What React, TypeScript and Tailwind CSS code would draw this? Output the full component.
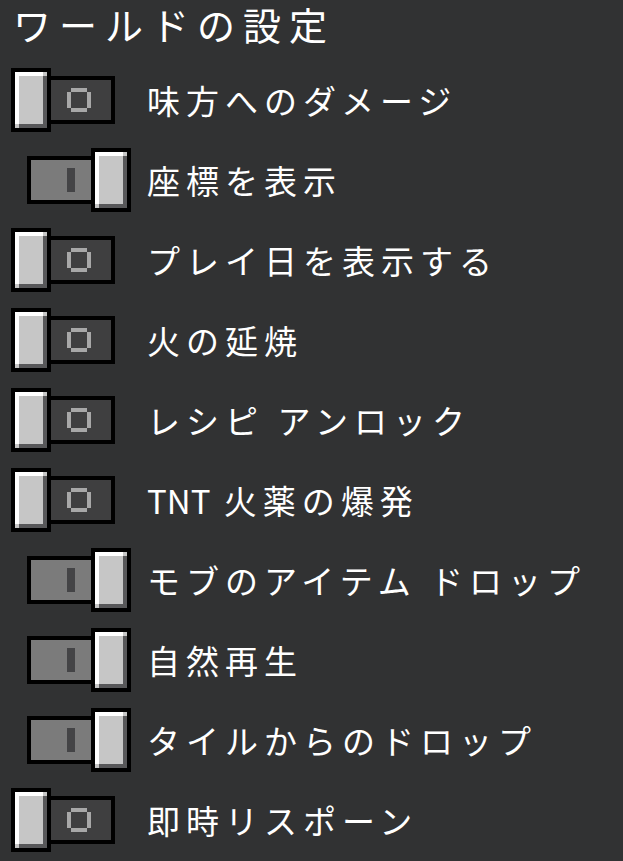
import React from 'react';

const settings = [
  { label: '味方へのダメージ', on: false },
  { label: '座標を表示', on: true },
  { label: 'プレイ日を表示する', on: false },
  { label: '火の延焼', on: false },
  { label: 'レシピ アンロック', on: false },
  { label: 'TNT 火薬の爆発', on: false, latin: 'TNT' },
  { label: 'モブのアイテム ドロップ', on: true },
  { label: '自然再生', on: true },
  { label: 'タイルからのドロップ', on: true },
  { label: '即時リスポーン', on: false },
];

// pixel-style knob with bevel
const Knob: React.FC = () => (
  <svg width="40" height="64" viewBox="0 0 40 64" shapeRendering="crispEdges" className="relative z-10 shrink-0">
    <rect x="0" y="0" width="40" height="64" fill="#000" />
    <rect x="4" y="4" width="32" height="56" fill="#c6c6c6" />
    <rect x="4" y="4" width="28" height="4" fill="#fff" />
    <rect x="4" y="4" width="4" height="52" fill="#fff" />
    <rect x="32" y="8" width="4" height="52" fill="#58585a" />
    <rect x="8" y="56" width="28" height="4" fill="#58585a" />
  </svg>
);

const OffMark: React.FC = () => (
  <svg width="24" height="24" viewBox="0 0 24 24" shapeRendering="crispEdges">
    <rect x="4" y="0" width="16" height="4" fill="#a8a8a8" />
    <rect x="4" y="20" width="16" height="4" fill="#a8a8a8" />
    <rect x="0" y="4" width="4" height="16" fill="#a8a8a8" />
    <rect x="20" y="4" width="4" height="16" fill="#a8a8a8" />
  </svg>
);

const Toggle: React.FC<{ on: boolean }> = ({ on }) => {
  if (on) {
    return (
      <div className="w-[120px] flex items-center justify-end">
        <div className="w-16 h-12 border-y-4 border-l-4 border-black bg-[#7b7b7b] flex items-center justify-end pr-4">
          <div className="w-2 h-6 bg-[#444446]" />
        </div>
        <Knob />
      </div>
    );
  }
  return (
    <div className="w-[120px] flex items-center justify-start">
      <Knob />
      <div className="w-16 h-12 border-y-4 border-r-4 border-black bg-[#3f3f40] flex items-center pl-4">
        <OffMark />
      </div>
    </div>
  );
};

export default function App() {
  return (
    <div
      className="w-full min-h-screen bg-[#313233] text-white"
      style={{ fontFamily: '"Noto Sans CJK JP", "Noto Sans", sans-serif' }}
    >
      <div className="h-[60px] flex items-center pb-3 pl-[13px]">
        <h1 className="text-[38px] tracking-[8px] leading-[44px] font-normal">ワールドの設定</h1>
      </div>
      {settings.map((s, i) => (
        <div key={i} className="h-20 flex items-center pl-[11px]">
          <Toggle on={s.on} />
          <div className="ml-4 text-[33px] tracking-[6px] leading-[44px] whitespace-nowrap">
            {s.latin ? (
              <>
                <span className="tracking-normal">{s.latin}</span>
                {s.label.slice(s.latin.length)}
              </>
            ) : (
              s.label
            )}
          </div>
        </div>
      ))}
    </div>
  );
}
